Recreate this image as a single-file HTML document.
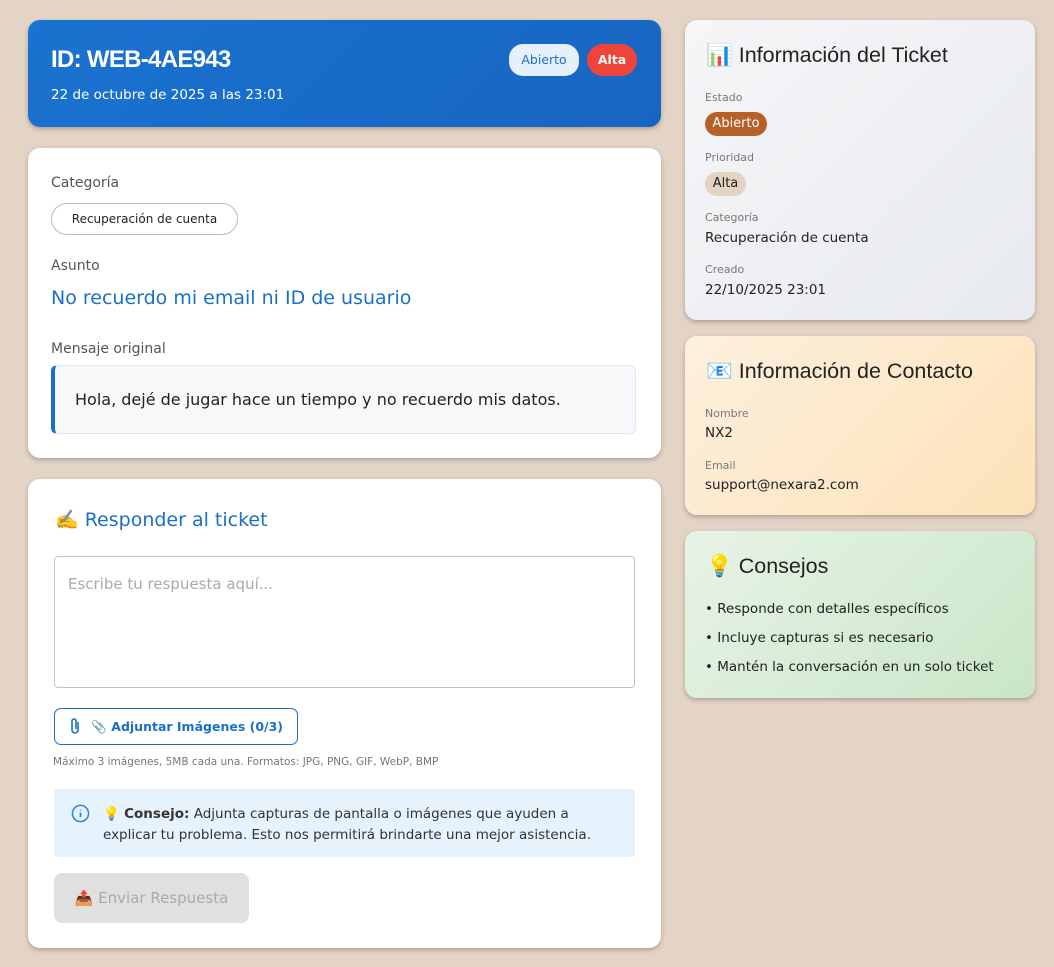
<!DOCTYPE html>
<html><head><meta charset="utf-8"><style>
*{box-sizing:border-box;margin:0;padding:0}
body{width:1054px;height:967px;background:#e4d4c6;font-family:"DejaVu Sans","Liberation Sans",sans-serif;position:relative;overflow:hidden;color:#222}
.card{position:absolute;border-radius:12px;box-shadow:0 2px 5px rgba(0,0,0,.25)}
.a{position:absolute;white-space:nowrap}
.lbl{font-size:11px;color:#777}
.val{font-size:13.5px;color:#222}
.h{font-family:"Liberation Sans",sans-serif;font-size:21.5px}
.pill{position:absolute;border-radius:14px;font-size:13px;text-align:center}
</style></head><body>
<div class="card" style="left:28px;top:20px;width:633px;height:107px;background:linear-gradient(135deg,#1a73d0,#1765c2)">
 <div class="a" style="left:23px;top:26px;font-family:'Liberation Sans',sans-serif;font-size:24px;font-weight:bold;color:#fff;letter-spacing:-0.7px">ID: WEB-4AE943</div>
 <div class="a" style="left:23px;top:67px;font-size:13.5px;color:#fff">22 de octubre de 2025 a las 23:01</div>
 <div class="pill" style="left:481px;top:24px;width:70px;height:32px;line-height:32px;background:#e6f0fb;color:#1a6fc8;font-size:12.5px">Abierto</div>
 <div class="pill" style="left:559px;top:24px;width:50px;height:32px;line-height:32px;background:#f0433a;color:#fff;font-weight:bold;border-radius:16px;font-size:12.5px">Alta</div>
</div>
<div class="card" style="left:28px;top:148px;width:633px;height:310px;background:#fff">
 <div class="a" style="left:23px;top:27px;font-size:14px;color:#555">Categoría</div>
 <div class="a" style="left:23px;top:55px;width:187px;height:32px;border:1px solid #bbb;border-radius:16px;font-size:12px;line-height:30px;text-align:center">Recuperación de cuenta</div>
 <div class="a" style="left:23px;top:110px;font-size:14px;color:#555">Asunto</div>
 <div class="a" style="left:23px;top:139px;font-size:19px;color:#1a6fc8">No recuerdo mi email ni ID de usuario</div>
 <div class="a" style="left:23px;top:193px;font-size:14px;color:#555">Mensaje original</div>
 <div class="a" style="left:23px;top:217px;width:585px;height:69px;background:#f6f8fa;border:1px solid #dde8f4;border-left:4px solid #1a6fc8;border-radius:6px;font-size:16px;line-height:67px;padding-left:20px">Hola, dejé de jugar hace un tiempo y no recuerdo mis datos.</div>
</div>
<div class="card" style="left:28px;top:479px;width:633px;height:469px;background:#fff">
 <div class="a" style="left:27px;top:29px;font-size:19px;color:#1a6fc8">✍️ Responder al ticket</div>
 <div class="a" style="left:26px;top:77px;width:581px;height:132px;border:1px solid #c4c4c4;border-radius:4px;font-size:15px;color:#aaa;padding:18px 13px">Escribe tu respuesta aquí...</div>
 <div class="a" style="left:26px;top:229px;width:244px;height:37px;border:1px solid #1a6fc8;border-radius:7px;font-size:12.5px;font-weight:bold;color:#1a6fc8;line-height:35px;padding-left:14px">
  <svg width="12" height="18" viewBox="0 0 12 18" style="vertical-align:-4px"><path d="M9 5v8a3 3 0 0 1-6 0V4a2 2 0 0 1 4 0v8" fill="none" stroke="#1a6fc8" stroke-width="1.6"/></svg>
  <span style="margin-left:6px">📎 Adjuntar Imágenes (0/3)</span></div>
 <div class="a" style="left:25px;top:277px;font-size:10.5px;color:#777">Máximo 3 imágenes, 5MB cada una. Formatos: JPG, PNG, GIF, WebP, BMP</div>
 <div class="a" style="left:26px;top:310px;width:581px;height:68px;background:#e6f2fc;border-radius:3px"></div>
 <svg class="a" style="left:43px;top:325px" width="19" height="19" viewBox="0 0 20 20"><circle cx="10" cy="10" r="8.5" fill="none" stroke="#2a88e0" stroke-width="1.6"/><path d="M10 9v5M10 6v1" stroke="#2a88e0" stroke-width="1.8"/></svg>
 <div class="a" style="left:75px;top:325px;font-size:13.5px;line-height:21px;color:#333">💡 <b>Consejo:</b> Adjunta capturas de pantalla o imágenes que ayuden a<br>explicar tu problema. Esto nos permitirá brindarte una mejor asistencia.</div>
 <div class="a" style="left:26px;top:394px;width:195px;height:50px;background:#e0e0e0;border-radius:8px;font-size:15px;color:#aaa;line-height:50px;text-align:center">📤 Enviar Respuesta</div>
</div>
<div class="card" style="left:685px;top:20px;width:350px;height:300px;background:linear-gradient(135deg,#f5f6f8,#e7eaee)">
 <div class="a h" style="left:21px;top:23px">📊 Información del Ticket</div>
 <div class="a lbl" style="left:20px;top:71px">Estado</div>
 <div class="pill" style="left:20px;top:92px;width:62px;height:24px;line-height:24px;background:#b8602a;color:#fff">Abierto</div>
 <div class="a lbl" style="left:20px;top:131px">Prioridad</div>
 <div class="pill" style="left:20px;top:152px;width:41px;height:24px;line-height:24px;background:#e2d3c3;color:#222">Alta</div>
 <div class="a lbl" style="left:20px;top:191px">Categoría</div>
 <div class="a val" style="left:20px;top:210px">Recuperación de cuenta</div>
 <div class="a lbl" style="left:20px;top:243px">Creado</div>
 <div class="a val" style="left:20px;top:262px">22/10/2025 23:01</div>
</div>
<div class="card" style="left:685px;top:336px;width:350px;height:179px;background:linear-gradient(135deg,#fdf0de,#fde2b8)">
 <div class="a h" style="left:21px;top:23px">📧 Información de Contacto</div>
 <div class="a lbl" style="left:20px;top:71px">Nombre</div>
 <div class="a val" style="left:20px;top:89px">NX2</div>
 <div class="a lbl" style="left:20px;top:123px">Email</div>
 <div class="a val" style="left:20px;top:141px">support@nexara2.com</div>
</div>
<div class="card" style="left:685px;top:531px;width:350px;height:167px;background:linear-gradient(135deg,#e8f3e6,#c9e6c8)">
 <div class="a h" style="left:21px;top:23px">💡 Consejos</div>
 <div class="a val" style="left:20px;top:70px">• Responde con detalles específicos</div>
 <div class="a val" style="left:20px;top:99px">• Incluye capturas si es necesario</div>
 <div class="a val" style="left:20px;top:128px">• Mantén la conversación en un solo ticket</div>
</div>
</body></html>
